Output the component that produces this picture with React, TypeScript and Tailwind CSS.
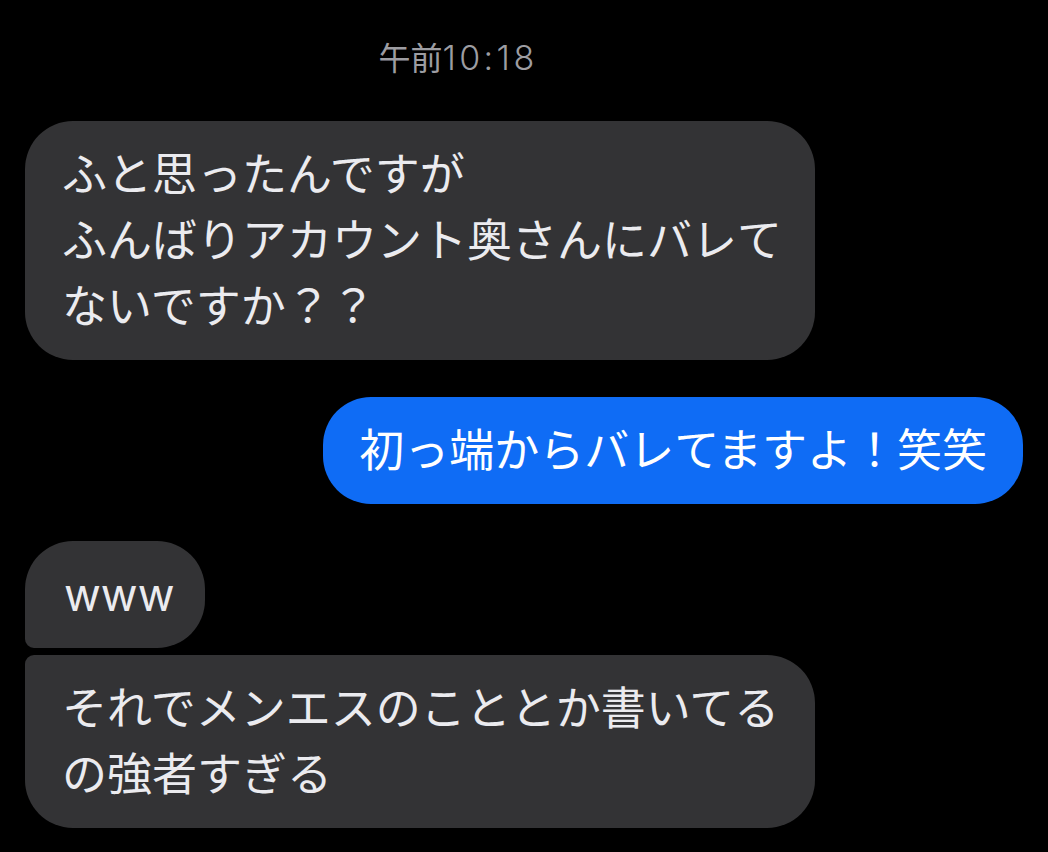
import React from 'react';

const font = { fontFamily: 'Inter, "Noto Sans CJK JP", sans-serif' };

type Msg = {
  id: number;
  from: 'them' | 'me';
  lines: string[];
  corner?: 'bl' | 'tl';
  wide?: boolean;
  pad: string;
  gap: string;
};

const messages: Msg[] = [
  {
    id: 1,
    from: 'them',
    lines: ['ふと思ったんですが', 'ふんばりアカウント奥さんにバレて', 'ないですか？？'],
    wide: true,
    pad: 'px-[37px]',
    gap: 'mb-[37px]',
  },
  { id: 2, from: 'me', lines: ['初っ端からバレてますよ！笑笑'], pad: 'px-[36px]', gap: 'mb-[37px]' },
  { id: 3, from: 'them', lines: ['www'], corner: 'bl', pad: 'pl-[39px] pr-[31px]', gap: 'mb-[7px]' },
  {
    id: 4,
    from: 'them',
    lines: ['それでメンエスのこととか書いてる', 'の強者すぎる'],
    corner: 'tl',
    wide: true,
    pad: 'px-[37px]',
    gap: '',
  },
];

function Bubble({ msg }: { msg: Msg }) {
  const mine = msg.from === 'me';
  return (
    <div
      className={`${msg.gap} ${msg.pad} ${mine ? 'self-end bg-[#0f6cf5] text-white' : 'self-start bg-[#333335] text-[#ebebef]'} ${
        msg.wide ? 'w-[790px]' : ''
      } rounded-[48px] ${msg.corner === 'bl' ? 'rounded-bl-[9px]' : ''} ${
        msg.corner === 'tl' ? 'rounded-tl-[9px]' : ''
      } py-[20.5px] text-[45px] leading-[66px] whitespace-nowrap`}
    >
      {msg.lines.map((l, i) => (
        <div key={i}>{l}</div>
      ))}
    </div>
  );
}

export default function App() {
  return (
    <div className="h-[852px] w-[1048px] overflow-hidden bg-black px-[25px] pt-[38px] flex flex-col" style={font}>
      <div className="pr-[132px] text-center text-[32px] leading-[40px] h-[40px] text-[#9d9da2] mb-[43px]">
        午前<span className="tracking-[0.1em] text-[34px] font-light">10:18</span>
      </div>
      {messages.map((m) => (
        <Bubble key={m.id} msg={m} />
      ))}
    </div>
  );
}
